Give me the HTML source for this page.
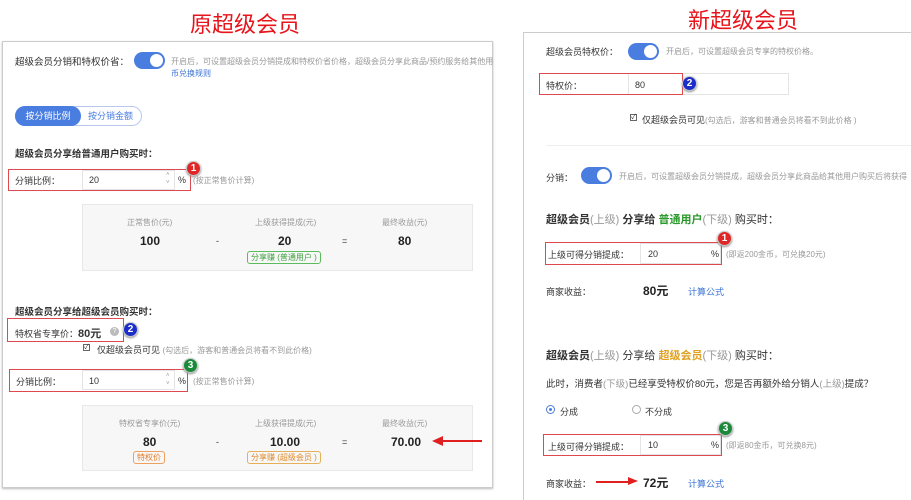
<!DOCTYPE html>
<html><head><meta charset="utf-8"><style>
*{margin:0;padding:0;box-sizing:border-box}
html,body{width:911px;height:500px;overflow:hidden}
body{background:#fff;position:relative;font-family:"Liberation Sans","Noto Sans CJK SC",sans-serif;font-size:9px;color:#333}
.a{position:absolute;white-space:nowrap}
.g{color:#999}
.t{color:#e8141b;font-size:22px}
.tog{position:absolute;width:31px;height:17px;border-radius:9px;background:#4a7de0}
.tog:after{content:"";position:absolute;right:2px;top:2px;width:13px;height:13px;border-radius:50%;background:#fff}
.box{position:absolute;border:1.5px solid #e04850}
.inp{position:absolute;border:1px solid #e4e4e4;background:#fff}
.badge{position:absolute;width:15px;height:15px;border-radius:50%;color:#fff;font-weight:bold;font-size:10px;text-align:center;line-height:14px;border:1px solid #ccc;box-shadow:0 1px 2px #888}
.calc{position:absolute;background:#f7f7f7;border:1px solid #e8e8e8}
.num{font-size:12px;font-weight:bold;color:#222}
.tag{position:absolute;border:1px solid;border-radius:3px;font-size:8px;padding:0 3px;line-height:11px}
.h{font-weight:bold;font-size:9.5px}
.chk{position:absolute;width:7px;height:7px;border:1px solid #666;font-size:7px;line-height:6px;text-align:center}
</style></head><body>
<div class="a t" style="left:190px;top:7px">原超级会员</div>
<div class="a t" style="left:688px;top:3px">新超级会员</div>

<!-- left panel -->
<div class="a" style="left:2px;top:41px;width:491px;height:447px;border:1px solid #ccc;box-shadow:0 1px 2px #bbb"></div>
<div class="a" style="left:15px;top:54px;font-size:9.5px">超级会员分销和特权价省：</div>
<div class="tog" style="left:134px;top:52px"></div>
<div class="a g" style="left:171px;top:56px;font-size:8px">开启后，可设置超级会员分销提成和特权价省价格，超级会员分享此商品/预约服务给其他用</div>
<div class="a" style="left:171px;top:68px;font-size:8px;color:#3b73d6">币兑换规则</div>
<div class="a" style="left:15px;top:106px;width:127px;height:20px;border:1px solid #b9c9ee;border-radius:10px"></div>
<div class="a" style="left:15px;top:106px;width:66px;height:20px;background:#4a7de0;border-radius:10px;color:#fff;text-align:center;line-height:20px">按分销比例</div>
<div class="a" style="left:88px;top:106px;line-height:20px;color:#4a7de0">按分销金额</div>
<div class="a h" style="left:15px;top:146px">超级会员分享给普通用户购买时：</div>
<div class="inp" style="left:82px;top:170px;width:93px;height:20px"></div>
<div class="box" style="left:8px;top:169px;width:183px;height:22px"></div>
<div class="a" style="left:15px;top:174px">分销比例：</div>
<div class="a" style="left:89px;top:175px">20</div>
<div class="a g" style="left:166px;top:171px;font-size:6px;line-height:8px">˄<br>˅</div>
<div class="a" style="left:178px;top:175px">%</div>
<div class="a g" style="left:193px;top:175px;font-size:8px">(按正常售价计算)</div>
<div class="badge" style="left:186px;top:161px;background:#e02727">1</div>
<div class="calc" style="left:82px;top:204px;width:391px;height:67px"></div>
<div class="a g" style="left:127px;top:217px;font-size:8px">正常售价(元)</div>
<div class="a g" style="left:255px;top:217px;font-size:8px">上级获得提成(元)</div>
<div class="a g" style="left:382px;top:217px;font-size:8px">最终收益(元)</div>
<div class="a num" style="left:140px;top:234px">100</div>
<div class="a" style="left:216px;top:236px">-</div>
<div class="a num" style="left:278px;top:234px">20</div>
<div class="a" style="left:342px;top:236px">=</div>
<div class="a num" style="left:398px;top:234px">80</div>
<div class="tag" style="left:247px;top:251px;color:#3fa23f;border-color:#5cbb5c">分享赚 (普通用户 )</div>

<div class="a h" style="left:15px;top:304px">超级会员分享给超级会员购买时：</div>
<div class="box" style="left:7px;top:318px;width:117px;height:24px"></div>
<div class="a" style="left:15px;top:325px">特权省专享价：<b style="font-size:11px">80元</b></div>
<div class="a" style="left:110px;top:327px;width:9px;height:9px;border-radius:50%;background:#bbb;color:#fff;font-size:7px;text-align:center;line-height:9px">?</div>
<div class="badge" style="left:123px;top:322px;background:#1b2ec9">2</div>
<div class="chk" style="left:83px;top:344px">✓</div>
<div class="a" style="left:97px;top:343px">仅超级会员可见 <span class="g" style="font-size:8px">(勾选后，游客和普通会员将看不到此价格)</span></div>
<div class="inp" style="left:82px;top:370px;width:93px;height:20px"></div>
<div class="box" style="left:9px;top:369px;width:179px;height:23px"></div>
<div class="a" style="left:16px;top:375px">分销比例：</div>
<div class="a" style="left:89px;top:376px">10</div>
<div class="a g" style="left:166px;top:372px;font-size:6px;line-height:8px">˄<br>˅</div>
<div class="a" style="left:178px;top:376px">%</div>
<div class="a g" style="left:193px;top:376px;font-size:8px">(按正常售价计算)</div>
<div class="badge" style="left:183px;top:358px;background:#1a8a3a">3</div>
<div class="calc" style="left:82px;top:405px;width:391px;height:66px"></div>
<div class="a g" style="left:119px;top:418px;font-size:8px">特权省专享价(元)</div>
<div class="a g" style="left:255px;top:418px;font-size:8px">上级获得提成(元)</div>
<div class="a g" style="left:382px;top:418px;font-size:8px">最终收益(元)</div>
<div class="a num" style="left:143px;top:435px">80</div>
<div class="a" style="left:216px;top:437px">-</div>
<div class="a num" style="left:270px;top:435px">10.00</div>
<div class="a" style="left:342px;top:437px">=</div>
<div class="a num" style="left:391px;top:435px">70.00</div>
<div class="tag" style="left:133px;top:451px;color:#e57e2a;border-color:#eea060">特权价</div>
<div class="tag" style="left:247px;top:451px;color:#e08a2a;border-color:#e6b05a">分享赚 (超级会员 )</div>
<div class="a" style="left:442px;top:440px;width:40px;height:1.5px;background:#e02020"></div>
<div class="a" style="left:432px;top:436px;width:0;height:0;border-top:5px solid transparent;border-bottom:5px solid transparent;border-right:11px solid #e02020"></div>

<!-- right panel -->
<div class="a" style="left:523px;top:32px;width:400px;height:480px;border:1px solid #ccc"></div>
<div class="a" style="left:546px;top:45px">超级会员特权价：</div>
<div class="tog" style="left:628px;top:43px"></div>
<div class="a g" style="left:666px;top:46px;font-size:8px">开启后，可设置超级会员专享的特权价格。</div>
<div class="inp" style="left:628px;top:73px;width:161px;height:22px"></div>
<div class="box" style="left:539px;top:73px;width:144px;height:22px"></div>
<div class="a" style="left:546px;top:79px">特权价：</div>
<div class="a" style="left:635px;top:80px">80</div>
<div class="badge" style="left:682px;top:76px;background:#1b2ec9">2</div>
<div class="chk" style="left:630px;top:114px">✓</div>
<div class="a" style="left:642px;top:113px">仅超级会员可见<span class="g" style="font-size:8px">(勾选后，游客和普通会员将看不到此价格 )</span></div>
<div class="a" style="left:546px;top:145px;width:365px;height:1px;background:#eee"></div>
<div class="a" style="left:546px;top:171px">分销：</div>
<div class="tog" style="left:581px;top:167px"></div>
<div class="a g" style="left:619px;top:171px;font-size:8px">开启后，可设置超级会员分销提成，超级会员分享此商品给其他用户购买后将获得</div>
<div class="a" style="left:546px;top:211px;font-size:11px"><b>超级会员</b><span class="g">(上级)</span> <b>分享给</b> <b style="color:#2a9a2a">普通用户</b><span class="g">(下级)</span> 购买时：</div>
<div class="inp" style="left:640px;top:243px;width:81px;height:21px"></div>
<div class="box" style="left:545px;top:242px;width:177px;height:23px"></div>
<div class="a" style="left:548px;top:248px">上级可得分销提成：</div>
<div class="a" style="left:648px;top:249px">20</div>
<div class="a" style="left:711px;top:249px">%</div>
<div class="a g" style="left:726px;top:249px;font-size:8px">(即返200金币，可兑换20元)</div>
<div class="badge" style="left:717px;top:231px;background:#e02727">1</div>
<div class="a" style="left:546px;top:285px">商家收益：</div>
<div class="a num" style="left:643px;top:282px">80元</div>
<div class="a" style="left:688px;top:285px;color:#3b73d6">计算公式</div>
<div class="a" style="left:546px;top:347px;font-size:11px"><b>超级会员</b><span class="g">(上级)</span> 分享给 <b style="color:#e0a020">超级会员</b><span class="g">(下级)</span> 购买时：</div>
<div class="a" style="left:546px;top:376px;font-size:9.5px">此时，消费者<span class="g">(下级)</span>已经享受特权价80元，您是否再额外给分销人<span class="g">(上级)</span>提成？</div>
<div class="a" style="left:546px;top:405px;width:9px;height:9px;border:1px solid #4a7de0;border-radius:50%"><div style="margin:2px;width:3px;height:3px;border-radius:50%;background:#4a7de0"></div></div>
<div class="a" style="left:560px;top:405px">分成</div>
<div class="a" style="left:632px;top:405px;width:9px;height:9px;border:1px solid #aaa;border-radius:50%"></div>
<div class="a" style="left:645px;top:405px">不分成</div>
<div class="inp" style="left:640px;top:435px;width:81px;height:20px"></div>
<div class="box" style="left:543px;top:434px;width:179px;height:22px"></div>
<div class="a" style="left:548px;top:440px">上级可得分销提成：</div>
<div class="a" style="left:648px;top:440px">10</div>
<div class="a" style="left:711px;top:440px">%</div>
<div class="a g" style="left:726px;top:440px;font-size:8px">(即返80金币，可兑换8元)</div>
<div class="badge" style="left:718px;top:421px;background:#1a8a3a">3</div>
<div class="a" style="left:546px;top:477px">商家收益：</div>
<div class="a" style="left:596px;top:481px;width:33px;height:1.5px;background:#e02020"></div>
<div class="a" style="left:628px;top:477px;width:0;height:0;border-top:4px solid transparent;border-bottom:4px solid transparent;border-left:10px solid #e02020"></div>
<div class="a num" style="left:643px;top:474px">72元</div>
<div class="a" style="left:688px;top:477px;color:#3b73d6">计算公式</div>
</body></html>
